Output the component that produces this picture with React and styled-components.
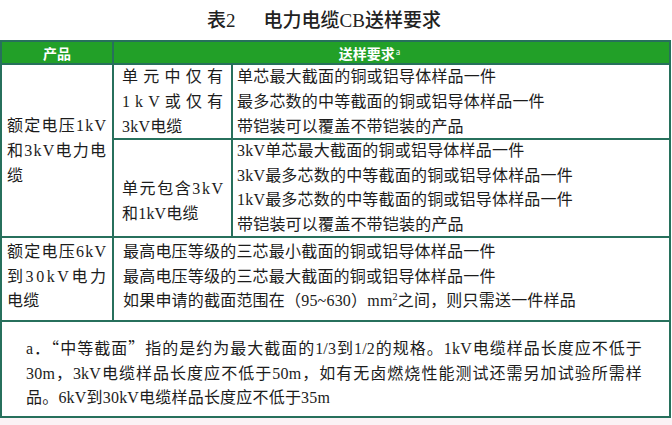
import React from 'react';
import styled, { createGlobalStyle } from 'styled-components';

const Global = createGlobalStyle`
  html, body { margin: 0; padding: 0; background: #ffffff; }
  body {
    font-family: "Liberation Serif", "Noto Sans CJK SC", serif;
    color: #1c1c1c;
  }
`;

const Page = styled.div`
  width: 672px;
  height: 425px;
  display: flex;
  flex-direction: column;
  overflow: hidden;
`;

const Title = styled.div`
  height: 40px;
  box-sizing: border-box;
  padding: 0 24px 4px 0;
  display: flex;
  align-items: center;
  justify-content: center;
  gap: 28px;
  font-size: 19px;
  font-weight: 500;
  color: #222;
`;

const Table = styled.div`
  width: 671px;
  box-sizing: border-box;
  display: grid;
  grid-template-columns: 110px 117px 436px;
  grid-template-rows: 21px 73px 96px 82px 94px;
  gap: 2px;
  padding: 2px;
  background: #27705c;
`;

const HeadCell = styled.div`
  grid-column: ${p => p.$col};
  grid-row: 1 / 2;
  background: #22a028;
  color: #ffffff;
  font-family: "Noto Sans CJK SC", sans-serif;
  font-weight: 700;
  font-size: 14px;
  display: flex;
  align-items: center;
  justify-content: center;
  padding-right: ${p => p.$shift || 0}px;
`;

const Sup = styled.sup`
  font-size: 8px;
  font-weight: 400;
  line-height: 0;
  margin-left: 1px;
  position: relative;
  top: -1px;
`;

const Cell = styled.div`
  grid-column: ${p => p.$col};
  grid-row: ${p => p.$row};
  background: #ffffff;
  font-size: 16px;
  letter-spacing: 0.2px;
  line-height: ${p => p.$lh || 25}px;
  display: flex;
  flex-direction: column;
  justify-content: ${p => p.$align || 'center'};
  padding: ${p => p.$pad};
  min-width: 0;
`;

const Line = styled.div`
  white-space: nowrap;
`;

const DistLine = styled.div`
  display: flex;
  justify-content: space-between;
  white-space: nowrap;
  letter-spacing: 0;
`;

const JustLine = styled.div`
  text-align: justify;
  text-align-last: justify;
  white-space: nowrap;
`;

const Cjk = styled.span`
  font-family: "Noto Sans CJK SC", sans-serif;
`;

const Small = styled.sup`
  font-size: 10px;
  line-height: 0;
`;

const Strip = styled.div`
  flex: 1;
  background: #fbf2f5;
`;

const Dist = ({ text }) => (
  <DistLine>
    {Array.from(text).map((c, i) => (
      <span key={i}>{c}</span>
    ))}
  </DistLine>
);

export default function App() {
  return (
    <Page>
      <Global />
      <Title>
        <span>表2</span>
        <span>电力电缆CB送样要求</span>
      </Title>
      <Table>
        <HeadCell $col="1 / 2">产品</HeadCell>
        <HeadCell $col="2 / 4" $shift={44}>
          送样要求<Sup>a</Sup>
        </HeadCell>

        <Cell $col="1 / 2" $row="2 / 4" $pad="0 6px 0 5px">
          <Dist text="额定电压1kV" />
          <Dist text="和3kV电力电" />
          <Line>缆</Line>
        </Cell>

        <Cell $col="2 / 3" $row="2 / 3" $pad="0 8px">
          <Dist text="单元中仅有" />
          <Dist text="1kV或仅有" />
          <Line>3kV电缆</Line>
        </Cell>
        <Cell $col="3 / 4" $row="2 / 3" $pad="0 0 0 4px">
          <Line>单芯最大截面的铜或铝导体样品一件</Line>
          <Line>最多芯数的中等截面的铜或铝导体样品一件</Line>
          <Line>带铠装可以覆盖不带铠装的产品</Line>
        </Cell>

        <Cell $col="2 / 3" $row="3 / 4" $pad="25px 8px 0 8px">
          <Dist text="单元包含3kV" />
          <Line>和1kV电缆</Line>
        </Cell>
        <Cell $col="3 / 4" $row="3 / 4" $pad="0 0 0 4px" $lh={24.5}>
          <Line>3kV单芯最大截面的铜或铝导体样品一件</Line>
          <Line>3kV最多芯数的中等截面的铜或铝导体样品一件</Line>
          <Line>1kV最多芯数的中等截面的铜或铝导体样品一件</Line>
          <Line>带铠装可以覆盖不带铠装的产品</Line>
        </Cell>

        <Cell $col="1 / 2" $row="4 / 5" $pad="2px 6px 0 5px" $align="flex-start" $lh={24.5}>
          <Dist text="额定电压6kV" />
          <Dist text="到30kV电力" />
          <Line>电缆</Line>
        </Cell>
        <Cell $col="2 / 4" $row="4 / 5" $pad="2px 0 0 9px" $align="flex-start" $lh={24.5}>
          <Line>最高电压等级的三芯最小截面的铜或铝导体样品一件</Line>
          <Line>最高电压等级的三芯最大截面的铜或铝导体样品一件</Line>
          <Line>
            如果申请的截面范围在（95~630）mm<Small>2</Small>之间，则只需送一件样品
          </Line>
        </Cell>

        <Cell $col="1 / 4" $row="5 / 6" $pad="13px 27px 0 24px" $align="flex-start" $lh={24.5}>
          <JustLine>
            a<Cjk>．“</Cjk>中等截面<Cjk>”</Cjk>指的是约为最大截面的1/3到1/2的规格。1kV电缆样品长度应不低于
          </JustLine>
          <JustLine>
            30m，3kV电缆样品长度应不低于50m，如有无卤燃烧性能测试还需另加试验所需样
          </JustLine>
          <Line>品。6kV到30kV电缆样品长度应不低于35m</Line>
        </Cell>
      </Table>
      <Strip />
    </Page>
  );
}
